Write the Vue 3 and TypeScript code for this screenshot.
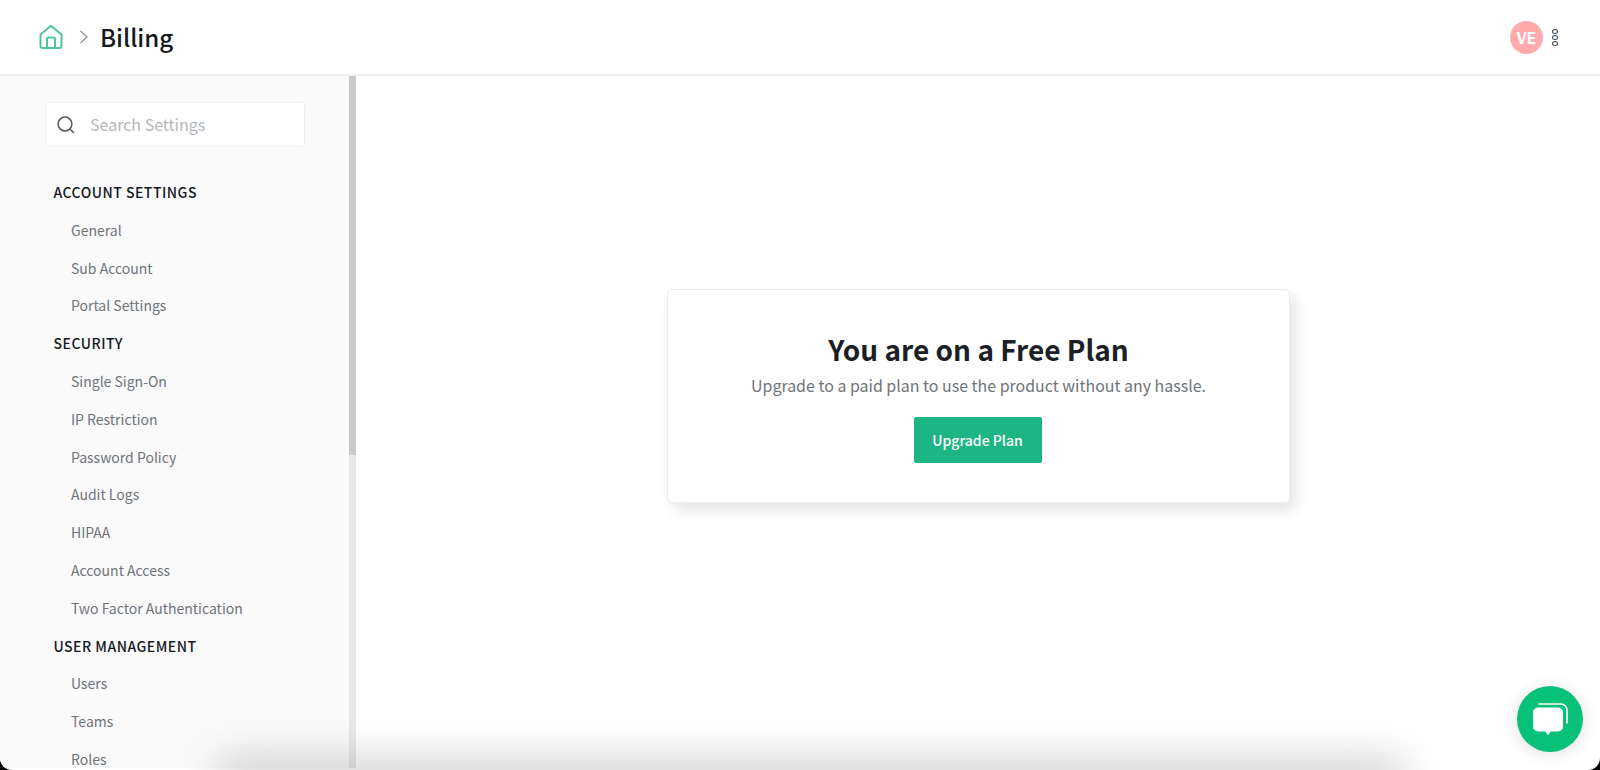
<template>
  <div class="app">
    <header class="topbar">
      <div class="crumbs">
        <svg class="home" width="26" height="26" viewBox="0 0 26 26" fill="none">
          <path d="M2.500 10.500 13 1.800l10.500 8.700V22a2 2 0 0 1-2 2h-17a2 2 0 0 1-2-2z" stroke="#4fc59b" stroke-width="2" stroke-linejoin="round" />
          <path d="M9 24v-9a1.500 1.500 0 0 1 1.500-1.500h5A1.500 1.500 0 0 1 17 15v9" stroke="#4fc59b" stroke-width="2" />
        </svg>
        <svg class="chev" width="10" height="14" viewBox="0 0 10 14" fill="none">
          <path d="M1.500 1 8 7l-6.500 6" stroke="#8a8f94" stroke-width="1.200" />
        </svg>
        <h1 class="crumb-title">Billing</h1>
      </div>
      <div class="user">
        <div class="avatar">VE</div>
        <div class="dots"><i></i><i></i><i></i></div>
      </div>
    </header>

    <div class="body">
      <aside class="side">
        <div class="side-inner">
          <div class="search">
            <svg width="20" height="20" viewBox="0 0 20 20" fill="none">
              <circle cx="9" cy="9" r="6.900" stroke="#555a60" stroke-width="1.500" />
              <path d="m14 14 3.500 3.500" stroke="#555a60" stroke-width="1.500" stroke-linecap="round" />
            </svg>
            <span class="placeholder">Search Settings</span>
          </div>
          <nav class="menu">
            <template v-for="group in groups" :key="group.title">
              <div class="group-title">{{ group.title }}</div>
              <a v-for="item in group.items" :key="item" class="item">{{ item }}</a>
            </template>
          </nav>
        </div>
        <div class="scroll"><div class="thumb"></div></div>
      </aside>

      <main class="main">
        <section class="card">
          <h2>You are on a Free Plan</h2>
          <p>Upgrade to a paid plan to use the product without any hassle.</p>
          <button class="upgrade">Upgrade Plan</button>
        </section>
      </main>
    </div>

    <div class="bottom-shade"></div>
    <button class="chat" aria-label="Chat">
      <svg width="36" height="36" viewBox="0 0 36 36" fill="none">
        <path d="M7 3h22a6 6 0 0 1 6 6v13" stroke="#fff" stroke-width="1.600" stroke-linecap="round" />
        <path d="M6 6.500h20a5 5 0 0 1 5 5v14a5 5 0 0 1-5 5h-7.500L16 34.500l-2.500-4H6a5 5 0 0 1-5-5v-14a5 5 0 0 1 5-5z" fill="#fff" />
      </svg>
    </button>
  </div>
</template>

<script setup lang="ts">
const groups = [
  { title: 'ACCOUNT SETTINGS', items: ['General', 'Sub Account', 'Portal Settings'] },
  {
    title: 'SECURITY',
    items: [
      'Single Sign-On',
      'IP Restriction',
      'Password Policy',
      'Audit Logs',
      'HIPAA',
      'Account Access',
      'Two Factor Authentication',
    ],
  },
  { title: 'USER MANAGEMENT', items: ['Users', 'Teams', 'Roles'] },
]
</script>

<style>
html,
body {
  margin: 0;
  overflow: hidden;
  background: #000;
}
</style>

<style scoped>
.app {
  position: relative;
  display: flex;
  flex-direction: column;
  width: 1600px;
  height: 770px;
  overflow: hidden;
  border-radius: 0 0 12px 12px;
  background: #fff;
  font-family: 'Noto Sans CJK SC', 'Noto Sans', sans-serif;
}

.topbar {
  display: flex;
  flex: none;
  align-items: center;
  justify-content: space-between;
  box-sizing: border-box;
  height: 76px;
  padding: 0 42px 0 38px;
  border-bottom: 2px solid #f0f0f0;
}

.crumbs {
  display: flex;
  align-items: center;
}

.home {
  margin-right: 15px;
}

.chev {
  margin-right: 11px;
}

.crumb-title {
  margin: 0;
  color: #14191f;
  font-size: 24.100px;
  font-weight: 500;
  line-height: 32px;
}

.user {
  display: flex;
  align-items: center;
  gap: 9px;
}

.avatar {
  display: flex;
  align-items: center;
  justify-content: center;
  width: 33px;
  height: 33px;
  border-radius: 50%;
  background: #ffabab;
  color: #fff;
  font-size: 16px;
  font-weight: 700;
}

.dots {
  display: flex;
  flex-direction: column;
  gap: 1px;
}

.dots i {
  display: block;
  box-sizing: border-box;
  width: 6px;
  height: 5px;
  border: 1.500px solid #3c4650;
  border-radius: 50%;
}

.body {
  display: flex;
  flex: 1;
  min-height: 0;
  margin-bottom: 2px;
}

.side {
  display: flex;
  flex: none;
  width: 356px;
  background: #fafafa;
}

.side-inner {
  flex: 1;
  box-sizing: border-box;
  padding: 26px 0 0 45px;
  overflow: hidden;
}

.search {
  display: flex;
  align-items: center;
  gap: 14px;
  box-sizing: border-box;
  width: 260px;
  height: 45px;
  padding: 0 10px;
  border: 1px solid #f0f0f0;
  border-radius: 3px;
  background: #fff;
}

.placeholder {
  padding-bottom: 2px;
  color: #b5b8bc;
  font-size: 16px;
}

.menu {
  display: flex;
  flex-direction: column;
  margin-top: 27px;
}

.group-title,
.item {
  display: block;
  flex: none;
  height: 37.800px;
  line-height: 37.800px;
  white-space: nowrap;
}

.group-title {
  padding-left: 8.500px;
  color: #14191f;
  font-size: 14px;
  font-weight: 500;
  letter-spacing: 0.5px;
}

.item {
  padding-left: 26px;
  color: #6e747a;
  font-size: 14px;
}

.scroll {
  flex: none;
  width: 7px;
  background: #e8e8e8;
}

.thumb {
  height: 379px;
  background: #cacaca;
}

.main {
  display: flex;
  flex: 1;
  align-items: flex-start;
  justify-content: center;
  padding-top: 213px;
}

.card {
  display: flex;
  flex-direction: column;
  align-items: center;
  box-sizing: border-box;
  width: 623px;
  height: 214px;
  margin-left: 1px;
  border: 1px solid #ececec;
  border-radius: 5px;
  background: #fff;
  box-shadow: 6px 8px 14px rgba(0, 0, 0, 0.1);
}

.card h2 {
  margin: 42px 0 0;
  color: #1a2026;
  font-size: 28px;
  font-weight: 700;
  line-height: 34px;
}

.card p {
  margin: 7px 0 0;
  color: #6e747a;
  font-size: 15.950px;
  line-height: 24px;
}

.upgrade {
  width: 128px;
  height: 46px;
  margin-top: 20px;
  margin-right: 2px;
  border: none;
  border-radius: 2px;
  background: #1db584;
  color: #fff;
  font-family: inherit;
  font-size: 14px;
  font-weight: 500;
}

.bottom-shade {
  position: absolute;
  right: 205px;
  bottom: -18px;
  left: 225px;
  height: 18px;
  box-shadow: 0 0 44px 8px rgba(0, 0, 0, 0.22);
  pointer-events: none;
}

.chat {
  position: absolute;
  right: 17px;
  bottom: 18px;
  display: flex;
  align-items: center;
  justify-content: center;
  width: 66px;
  height: 66px;
  padding: 0;
  border: none;
  border-radius: 50%;
  background: #06c177;
  box-shadow: 0 2px 18px rgba(0, 0, 0, 0.12);
}
</style>
